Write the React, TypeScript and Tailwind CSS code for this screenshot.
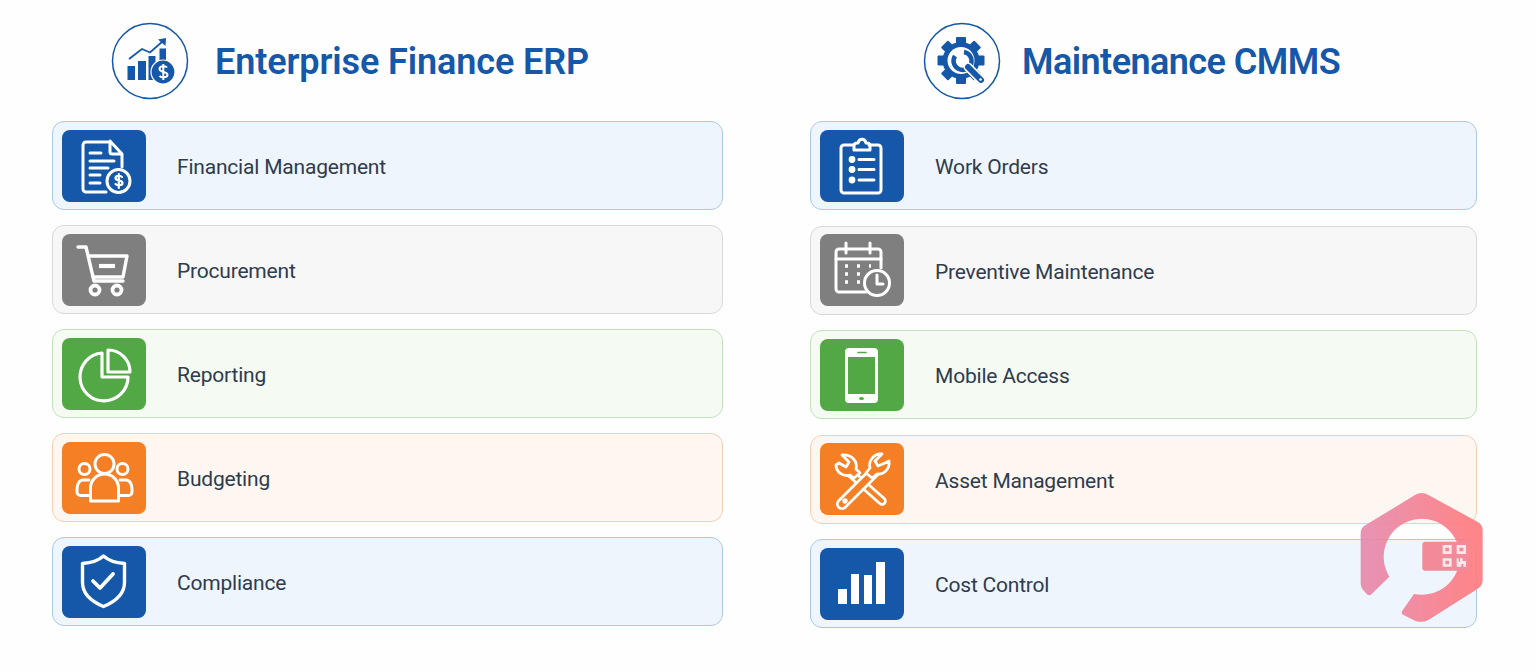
import type { ReactNode } from "react";

const tones = {
  blue: { card: "bg-[#eef5fd] border-[#a9c9e8]", box: "bg-[#1557a8]" },
  gray: { card: "bg-[#f7f7f7] border-[#d8d8d8]", box: "bg-[#7f7f7f]" },
  green: { card: "bg-[#f5faf3] border-[#c3e2bb]", box: "bg-[#52a845]" },
  orange: { card: "bg-[#fef7f1] border-[#f6cfb3]", box: "bg-[#f47f24]" },
};

function Glyph({ children }: { children: ReactNode }) {
  return (
    <svg viewBox="0 0 84 72" className="w-full h-full" fill="none" stroke="white" strokeWidth="3" strokeLinecap="round" strokeLinejoin="round">
      {children}
    </svg>
  );
}

const DocIcon = () => (
  <Glyph>
    <path d="M46 12H24a3 3 0 0 0-3 3v44a3 3 0 0 0 3 3h20" />
    <path d="M48 11v11a2 2 0 0 0 2 2h10v13M48 11l12 13" />
    <path d="M28 23h11M28 31h24M28 38h18M28 45h10M28 53h10" />
    <circle cx="56.500" cy="51" r="11.500" />
    <path d="M60 47c-1-1.500-6.500-2-6.500 1 0 3.500 7 1.500 7 5 0 3-5.500 2.500-7 1M56.800 44v14" strokeWidth="2.200" />
  </Glyph>
);

const CartIcon = () => (
  <Glyph>
    <path d="M16 13h8l8 34h29" strokeWidth="3.400" />
    <path d="M27 22h38l-4 21H31" strokeWidth="3.400" />
    <path d="M37 32h16" strokeWidth="4.200" strokeLinecap="butt" />
    <circle cx="33" cy="56" r="4.500" strokeWidth="3.800" />
    <circle cx="55" cy="56" r="4.500" strokeWidth="3.800" />
  </Glyph>
);

const PieIcon = () => (
  <Glyph>
    <path d="M40 15a24 24 0 1 0 26 24H40z" strokeWidth="3.200" />
    <path d="M46 12v22h22a22 22 0 0 0-22-22z" strokeWidth="3.200" />
  </Glyph>
);

const PeopleIcon = () => (
  <Glyph>
    <circle cx="42.500" cy="22" r="9.500" />
    <circle cx="22.500" cy="27" r="5.500" />
    <circle cx="60.500" cy="27" r="5.500" />
    <path d="M28.500 59V46a14 14 0 0 1 28 0v13z" />
    <path d="M27 38h-6c-4 0-6 5-6 9v3c0 2 1.500 3.500 3.500 3.500H27" />
    <path d="M58 38h6c4 0 6 5 6 9v3c0 2-1.500 3.500-3.500 3.500H58" />
  </Glyph>
);

const ShieldIcon = () => (
  <Glyph>
    <path d="M41.500 10c5 4.500 13 7 21 7.500v19c0 11-9 19-21 24-12-5-21-13-21-24v-19c8-.5 16-3 21-7.500z" strokeWidth="3.400" />
    <path d="M31 35l7 7 13-14" strokeWidth="3.800" />
  </Glyph>
);

const ClipboardIcon = () => (
  <Glyph>
    <path d="M33 15h-9a3 3 0 0 0-3 3v42a3 3 0 0 0 3 3h34a3 3 0 0 0 3-3V18a3 3 0 0 0-3-3h-9" />
    <path d="M34 20v-4c0-2 1-3 3-3h1c1-5 7-5 8 0h1c2 0 3 1 3 3v4z" />
    <circle cx="32" cy="29.500" r="1.900" fill="white" />
    <circle cx="32" cy="39.500" r="1.900" fill="white" />
    <circle cx="32" cy="50" r="1.900" fill="white" />
    <path d="M39 29.500h15M39 39.500h15M39 50h15" />
  </Glyph>
);

const CalendarIcon = () => (
  <Glyph>
    <path d="M46 58H19a3 3 0 0 1-3-3V18a3 3 0 0 1 3-3h39a3 3 0 0 1 3 3v16" />
    <path d="M16 25h45M26 9v10M50 9v10" />
    <path d="M25 32h3M37 32h3M49 32h2M25 40h3M37 40h3M25 48h3M37 48h3" strokeWidth="3.500" strokeLinecap="butt" />
    <circle cx="57" cy="49" r="12.500" />
    <path d="M57 41v9h6" />
  </Glyph>
);

const PhoneIcon = () => (
  <Glyph>
    <rect x="25" y="9" width="33" height="55" rx="4" fill="white" stroke="none" />
    <rect x="28" y="18" width="27" height="37" fill="#52a845" stroke="none" />
    <path d="M38 13.500h8" stroke="#52a845" strokeWidth="1.600" />
    <ellipse cx="41.500" cy="59.500" rx="2.500" ry="1.600" fill="#52a845" stroke="none" />
  </Glyph>
);

const ToolsIcon = () => (
  <Glyph>
    <path d="M27 27L62 58" strokeWidth="9.500" />
    <path d="M27 27L62 58" stroke="#f47f24" strokeWidth="4" />
    <path d="M56 27L22 61" strokeWidth="12" />
    <path d="M56 27L22 61" stroke="#f47f24" strokeWidth="6.500" />
    <path d="M22 12l7 7-3 5-7-4-3 2c0 7 7 12 14 10l4 3 6-5-4-4c2-7-4-15-14-14z" fill="#f47f24" strokeWidth="2.800" />
    <path d="M62 11l-7 7 3 5 7-3 4-2c1 8-5 14-12 13l-5 4-6-5 4-5c-2-8 5-15 12-14z" fill="#f47f24" strokeWidth="2.800" />
    <circle cx="25" cy="58" r="1.200" fill="white" />
  </Glyph>
);

const BarsIcon = () => (
  <svg viewBox="0 0 84 72" className="w-full h-full" fill="white">
    <rect x="18" y="41" width="9" height="15" />
    <rect x="31" y="26" width="8" height="30" />
    <rect x="44" y="27" width="8" height="29" />
    <rect x="56" y="14" width="9" height="42" />
  </svg>
);

function FinanceBadge() {
  return (
    <svg viewBox="0 0 78 78" className="w-[78px] h-[78px] shrink-0" fill="#1557a8">
      <circle cx="39" cy="39" r="37.500" fill="none" stroke="#1557a8" strokeWidth="1.500" />
      <rect x="16.500" y="44" width="7.500" height="14" />
      <rect x="27" y="39" width="8" height="19" />
      <rect x="37.500" y="34" width="7" height="24" />
      <rect x="48.500" y="26.500" width="6.500" height="17" />
      <path d="M18 37l13-10 8 3.500L52 19" fill="none" stroke="#1557a8" strokeWidth="1.800" />
      <path d="M47 17.500l8-1.500-.5 8z" />
      <circle cx="52" cy="50" r="12" stroke="white" strokeWidth="1.200" />
      <path d="M56 45.500c-1.500-2-7.500-2-7.500 1.500 0 4 8 1.800 8 5.800 0 3.500-6.500 3-8 1M52.300 42v16" fill="none" stroke="white" strokeWidth="2" />
    </svg>
  );
}

function GearBadge() {
  const teeth = [0, 45, 90, 135, 180, 225, 270, 315];
  return (
    <svg viewBox="0 0 78 78" className="w-[78px] h-[78px] shrink-0" fill="#1557a8">
      <circle cx="39" cy="39" r="37.500" fill="none" stroke="#1557a8" strokeWidth="1.500" />
      {teeth.map((a) => (
        <rect key={a} x="33" y="15" width="10" height="9" rx="1" transform={`rotate(${a} 38 38.500)`} />
      ))}
      <circle cx="38" cy="38.500" r="18.500" />
      <circle cx="38" cy="38.500" r="13.500" fill="white" />
      <path d="M32 34A9 9 0 1 0 41 30" fill="none" stroke="#1557a8" strokeWidth="4.500" />
      <path d="M45 45L58 58" stroke="white" strokeWidth="9" strokeLinecap="round" />
      <path d="M45 45L58 58" stroke="#1557a8" strokeWidth="6" strokeLinecap="round" />
      <circle cx="57.500" cy="57.500" r="1.300" fill="white" />
    </svg>
  );
}

function Watermark() {
  return (
    <svg viewBox="0 0 480 480" className="absolute left-[1340px] top-[480px] w-[160px] h-[160px] opacity-90">
      <defs>
        <linearGradient id="mark" x1="0" x2="1" y1="0" y2="0">
          <stop offset="0.1" stopColor="#e887a9" />
          <stop offset="0.9" stopColor="#ff7a7e" />
        </linearGradient>
      </defs>
      <path
        d="M148 290L95 342q-7 7-14 1L70 331q-8-8-8-20V160q0-16 14-24L225 45q20-12 40 0L412 125q16 8 16 26V300q0 18-16 27L265 420q-20 10-40 2L192 406q-12-5-4-15L222 342A114 114 0 1 0 148 290z"
        fill="url(#mark)"
      />
      <path d="M256 185H385V272H256q-9 0-9-9V194q0-9 9-9z" fill="#f37f8f" />
      <path
        d="M308 195h27v27h-27zM350 195h28v27h-28zM308 235h27v25h-27zM350 235h6v10h4v-10h8v8h10v17h-8v-8h-6v8h-14z"
        fill="#fde8ea"
      />
      <path d="M316 203h11v11h-11zM358 203h12v11h-12zM316 242h11v11h-11z" fill="#f37f8f" />
    </svg>
  );
}

type Row = { label: string; tone: keyof typeof tones; icon: ReactNode };

const finance: Row[] = [
  { label: "Financial Management", tone: "blue", icon: <DocIcon /> },
  { label: "Procurement", tone: "gray", icon: <CartIcon /> },
  { label: "Reporting", tone: "green", icon: <PieIcon /> },
  { label: "Budgeting", tone: "orange", icon: <PeopleIcon /> },
  { label: "Compliance", tone: "blue", icon: <ShieldIcon /> },
];

const maintenance: Row[] = [
  { label: "Work Orders", tone: "blue", icon: <ClipboardIcon /> },
  { label: "Preventive Maintenance", tone: "gray", icon: <CalendarIcon /> },
  { label: "Mobile Access", tone: "green", icon: <PhoneIcon /> },
  { label: "Asset Management", tone: "orange", icon: <ToolsIcon /> },
  { label: "Cost Control", tone: "blue", icon: <BarsIcon /> },
];

function FeatureRow({ row }: { row: Row }) {
  const tone = tones[row.tone];
  return (
    <div className={`h-[89px] flex items-center gap-[31px] pl-[9px] rounded-xl border ${tone.card}`}>
      <div className={`w-[84px] h-[72px] shrink-0 rounded-lg ${tone.box}`}>{row.icon}</div>
      <span className="pt-[5px] text-[21px] tracking-[-0.2px] text-[#2f3b4e] font-[Roboto,sans-serif]">{row.label}</span>
    </div>
  );
}

export default function App() {
  return (
    <div className="relative w-[1536px] h-[672px] overflow-hidden bg-[#fefefe] flex gap-[87px] pl-[52px] pt-[22px] font-[Roboto,sans-serif]">
      <div className="w-[671px]">
        <div className="flex items-center gap-[26px] pl-[59px] h-[78px] mb-[21px]">
          <FinanceBadge />
          <h1 className="pt-[2px] text-[36px] font-semibold tracking-[-0.1px] text-[#1557a8]">Enterprise Finance ERP</h1>
        </div>
        <div className="flex flex-col gap-[15px]">
          {finance.map((row) => (
            <FeatureRow key={row.label} row={row} />
          ))}
        </div>
      </div>
      <div className="w-[667px]">
        <div className="flex items-center gap-[21px] pl-[113px] h-[78px] mb-[21px]">
          <GearBadge />
          <h1 className="pt-[2px] text-[36px] font-semibold tracking-[-0.55px] text-[#1557a8]">Maintenance CMMS</h1>
        </div>
        <div className="flex flex-col gap-[15.5px]">
          {maintenance.map((row) => (
            <FeatureRow key={row.label} row={row} />
          ))}
        </div>
      </div>
      <Watermark />
    </div>
  );
}
